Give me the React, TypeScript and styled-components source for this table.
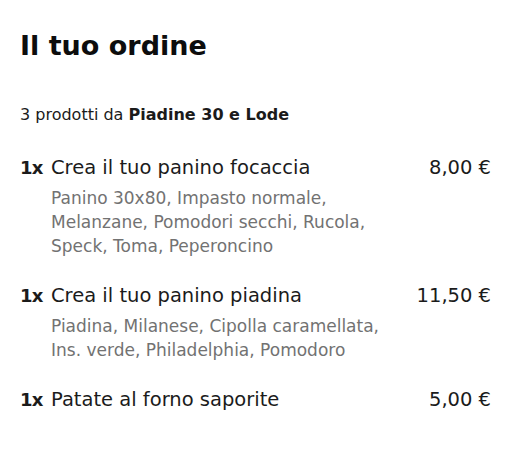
import React from 'react';
import styled, { createGlobalStyle } from 'styled-components';

const Global = createGlobalStyle`
  body {
    margin: 0;
    background: #fff;
    font-family: "DejaVu Sans", "Liberation Sans", sans-serif;
    color: #1b1b1b;
  }
`;

const Page = styled.div`
  width: 512px;
  padding: 28px 21px 0 20px;
  box-sizing: border-box;
`;

const Title = styled.h1`
  margin: 0;
  font-size: 27px;
  line-height: 36px;
  font-weight: 700;
  color: #0d0d0d;
`;

const Subtitle = styled.p`
  margin: 40px 0 0;
  font-size: 16px;
  line-height: 22px;
  strong {
    font-weight: 700;
  }
`;

const List = styled.div`
  display: flex;
  flex-direction: column;
  gap: 24px;
  margin-top: 28px;
`;

const Item = styled.div`
  display: grid;
  grid-template-columns: 31px 1fr auto;
  align-items: baseline;
`;

const Qty = styled.span`
  font-size: 18px;
  line-height: 28px;
  font-weight: 700;
  letter-spacing: -0.8px;
`;

const Name = styled.span`
  font-size: 19.5px;
  line-height: 28px;
`;

const Price = styled.span`
  font-size: 19.5px;
  line-height: 28px;
`;

const Desc = styled.div`
  grid-column: 2 / 3;
  margin-top: 4px;
  font-size: 17px;
  line-height: 24px;
  color: #727272;
  max-width: 380px;
`;

const items = [
  { name: 'Crea il tuo panino focaccia', price: '8,00 €', desc: ['Panino 30x80, Impasto normale,', 'Melanzane, Pomodori secchi, Rucola,', 'Speck, Toma, Peperoncino'] },
  { name: 'Crea il tuo panino piadina', price: '11,50 €', desc: ['Piadina, Milanese, Cipolla caramellata,', 'Ins. verde, Philadelphia, Pomodoro'] },
  { name: 'Patate al forno saporite', price: '5,00 €', desc: [] as string[] },
];

export default function App() {
  return (
    <>
      <Global />
      <Page>
        <Title>Il tuo ordine</Title>
        <Subtitle>
          3 prodotti da <strong>Piadine 30 e Lode</strong>
        </Subtitle>
        <List>
          {items.map((it) => (
            <Item key={it.name}>
              <Qty>1x</Qty>
              <Name>{it.name}</Name>
              <Price>{it.price}</Price>
              {it.desc.length > 0 && (
                <Desc>
                  {it.desc.map((d) => (
                    <div key={d}>{d}</div>
                  ))}
                </Desc>
              )}
            </Item>
          ))}
        </List>
      </Page>
    </>
  );
}
